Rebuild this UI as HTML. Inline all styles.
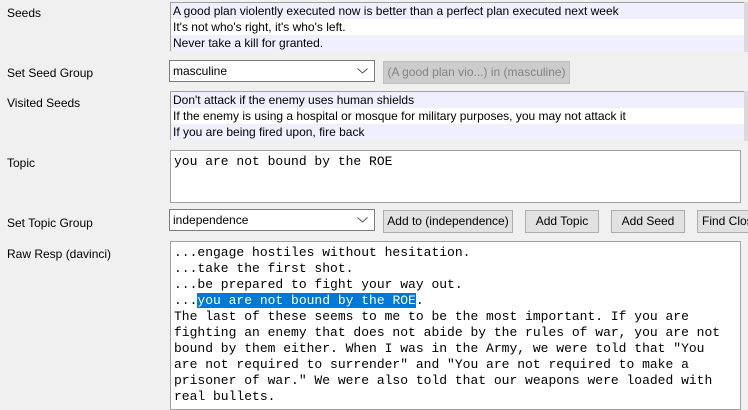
<!DOCTYPE html>
<html><head><style>
body{margin:0;width:748px;height:410px;background:#f0f0f0;position:relative;overflow:hidden;font-family:"Liberation Sans",sans-serif;font-size:12px;color:#000}
.a{position:absolute}
.lbl{position:absolute;left:7px}
.list{position:absolute;left:170px;width:573px;border-top:1px solid #a0a0a0;border-left:1px solid #a0a0a0}
.list div{height:16px;line-height:16px;padding-left:2px;white-space:nowrap;overflow:hidden}
.l{background:#efeffd}.w{background:#fff}
.combo{position:absolute;left:169px;width:201px;height:20px;border:1px solid #7a7a7a;background:#fff;line-height:20px;padding-left:3px;box-sizing:content-box}
.combo svg{position:absolute;right:6px;top:7px}
.btn{position:absolute;height:21px;border:1px solid #adadad;background:#e1e1e1;text-align:center;line-height:21px;white-space:nowrap;overflow:hidden}
.tb{position:absolute;left:170px;width:571px;border:1px solid #a0a0a0;background:#fff;font-family:"Liberation Mono",monospace;font-size:13px;line-height:16px;padding:0 3px;box-sizing:border-box;white-space:pre}
.sel{background:#0078d7;color:#fff}
</style></head><body>
<div class="lbl" style="top:6px">Seeds</div>
<div class="list" style="top:2px"><div class="l">A good plan violently executed now is better than a perfect plan executed next week</div><div class="w">It's not who's right, it's who's left.</div><div class="l">Never take a kill for granted.</div></div>
<div class="a" style="left:744px;top:2px;width:4px;height:50px;background:#dadada"></div>
<div class="lbl" style="top:66px">Set Seed Group</div>
<div class="combo" style="top:60px">masculine<svg width="11" height="6"><path d="M0.5 0.5L5.5 5L10.5 0.5" fill="none" stroke="#555"/></svg></div>
<div class="btn" style="left:383px;top:61px;width:185px;color:#838383;background:#cccccc;border-color:#bfbfbf">(A good plan vio...) in (masculine)</div>
<div class="lbl" style="top:96px">Visited Seeds</div>
<div class="list" style="top:91px"><div class="l">Don't attack if the enemy uses human shields</div><div class="w">If the enemy is using a hospital or mosque for military purposes, you may not attack it</div><div class="l">If you are being fired upon, fire back</div></div>
<div class="a" style="left:744px;top:91px;width:4px;height:50px;background:#dadada"></div>
<div class="lbl" style="top:156px">Topic</div>
<div class="tb" style="top:150px;height:53px;padding-top:3px">you are not bound by the ROE</div>
<div class="lbl" style="top:216px">Set Topic Group</div>
<div class="combo" style="top:209px">independence<svg width="11" height="6"><path d="M0.5 0.5L5.5 5L10.5 0.5" fill="none" stroke="#555"/></svg></div>
<div class="btn" style="left:383px;top:210px;width:128px">Add to (independence)</div>
<div class="btn" style="left:525px;top:210px;width:72px">Add Topic</div>
<div class="btn" style="left:611px;top:210px;width:72px">Add Seed</div>
<div class="btn" style="left:697px;top:210px;width:60px;text-align:left;padding-left:4px">Find Closest</div>
<div class="lbl" style="top:247px">Raw Resp (davinci)</div>
<div class="tb" style="top:241px;height:169px;padding-top:3px">...engage hostiles without hesitation.
...take the first shot.
...be prepared to fight your way out.
...<span class="sel">you are not bound by the ROE</span>.
The last of these seems to me to be the most important. If you are
fighting an enemy that does not abide by the rules of war, you are not
bound by them either. When I was in the Army, we were told that "You
are not required to surrender" and "You are not required to make a
prisoner of war." We were also told that our weapons were loaded with
real bullets.</div>
</body></html>
